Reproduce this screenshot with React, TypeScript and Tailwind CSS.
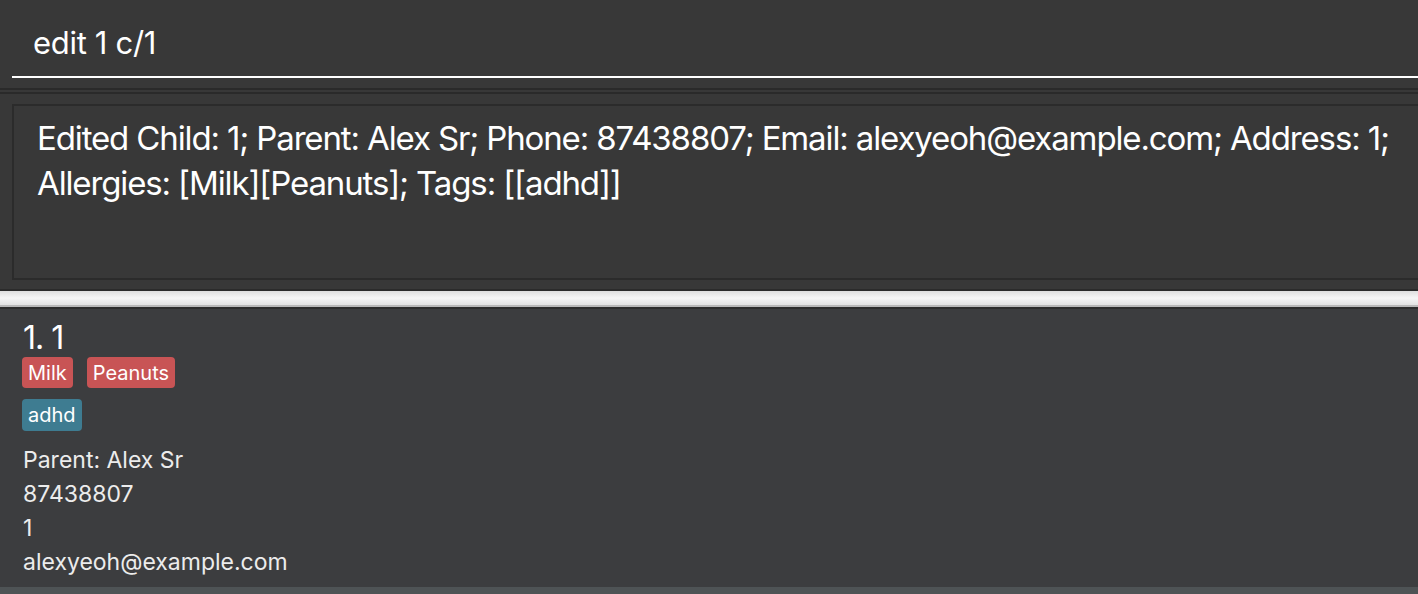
import React from "react";

const Tag = ({ label, color }: { label: string; color: string }) => (
  <span
    className={`inline-flex h-[31px] items-center rounded-[4px] px-[6px] text-[20px] leading-none text-white ${color}`}
  >
    {label}
  </span>
);

const App = () => {
  return (
    <div className="flex h-[594px] w-[1418px] flex-col overflow-hidden bg-[#383838] font-['Inter',sans-serif] text-white">
      {/* command box */}
      <div className="pl-3">
        <div className="h-[78px] border-b-2 border-white pl-[21px] pt-[25px] text-[31px] leading-[36px] tracking-[-0.01em]">
          edit 1 c/1
        </div>
      </div>

      {/* separators */}
      <div className="mt-[10px] h-[2px] bg-[#2a2a2a]" />
      <div className="mt-[2px] h-[2px] bg-[#2a2a2a]" />

      {/* result display */}
      <div className="ml-3 mt-[10px] h-[176px] border-2 border-r-0 border-[#2b2b2b] pl-[23px] pt-[10px] text-[33px] leading-[45px] tracking-[-1.13px]">
        <div className="whitespace-nowrap">
          Edited Child: 1; Parent: Alex Sr; Phone: 87438807; Email: alexyeoh@example.com; Address: 1;
        </div>
        <div className="whitespace-nowrap">Allergies: [Milk][Peanuts]; Tags: [[adhd]]</div>
      </div>

      {/* splitter */}
      <div className="mt-[9px] h-[2px] bg-[#2b2b2b]" />
      <div className="h-[14px] bg-gradient-to-b from-[#dedede] via-[#f6f6f6] to-[#e2e2e2]" />
      <div className="h-[2px] bg-[#b9b9b9]" />
      <div className="h-[2px] bg-[#2d2d2d]" />

      {/* person list */}
      <div className="flex h-[278px] flex-col bg-[#3c3d3f] pl-[23px] pt-[10px]">
        <div className="text-[32px] leading-[38px] tracking-[-0.03em]">1. 1</div>
        <div className="-ml-px flex gap-[14px]">
          <Tag label="Milk" color="bg-[#c85455]" />
          <Tag label="Peanuts" color="bg-[#c85455]" />
        </div>
        <div className="-ml-px mt-[11px] flex">
          <span className="inline-flex h-[32px] items-center rounded-[4px] bg-[#3e7c91] px-[6px] text-[20px] leading-none text-white">
            adhd
          </span>
        </div>
        <div className="mt-[12px] text-[23px] leading-[34px] text-[#ececec]">
          <div>Parent: Alex Sr</div>
          <div>87438807</div>
          <div>1</div>
          <div>alexyeoh@example.com</div>
        </div>
      </div>
      <div className="flex-1 bg-[#4e5355]" />
    </div>
  );
};

export default App;
